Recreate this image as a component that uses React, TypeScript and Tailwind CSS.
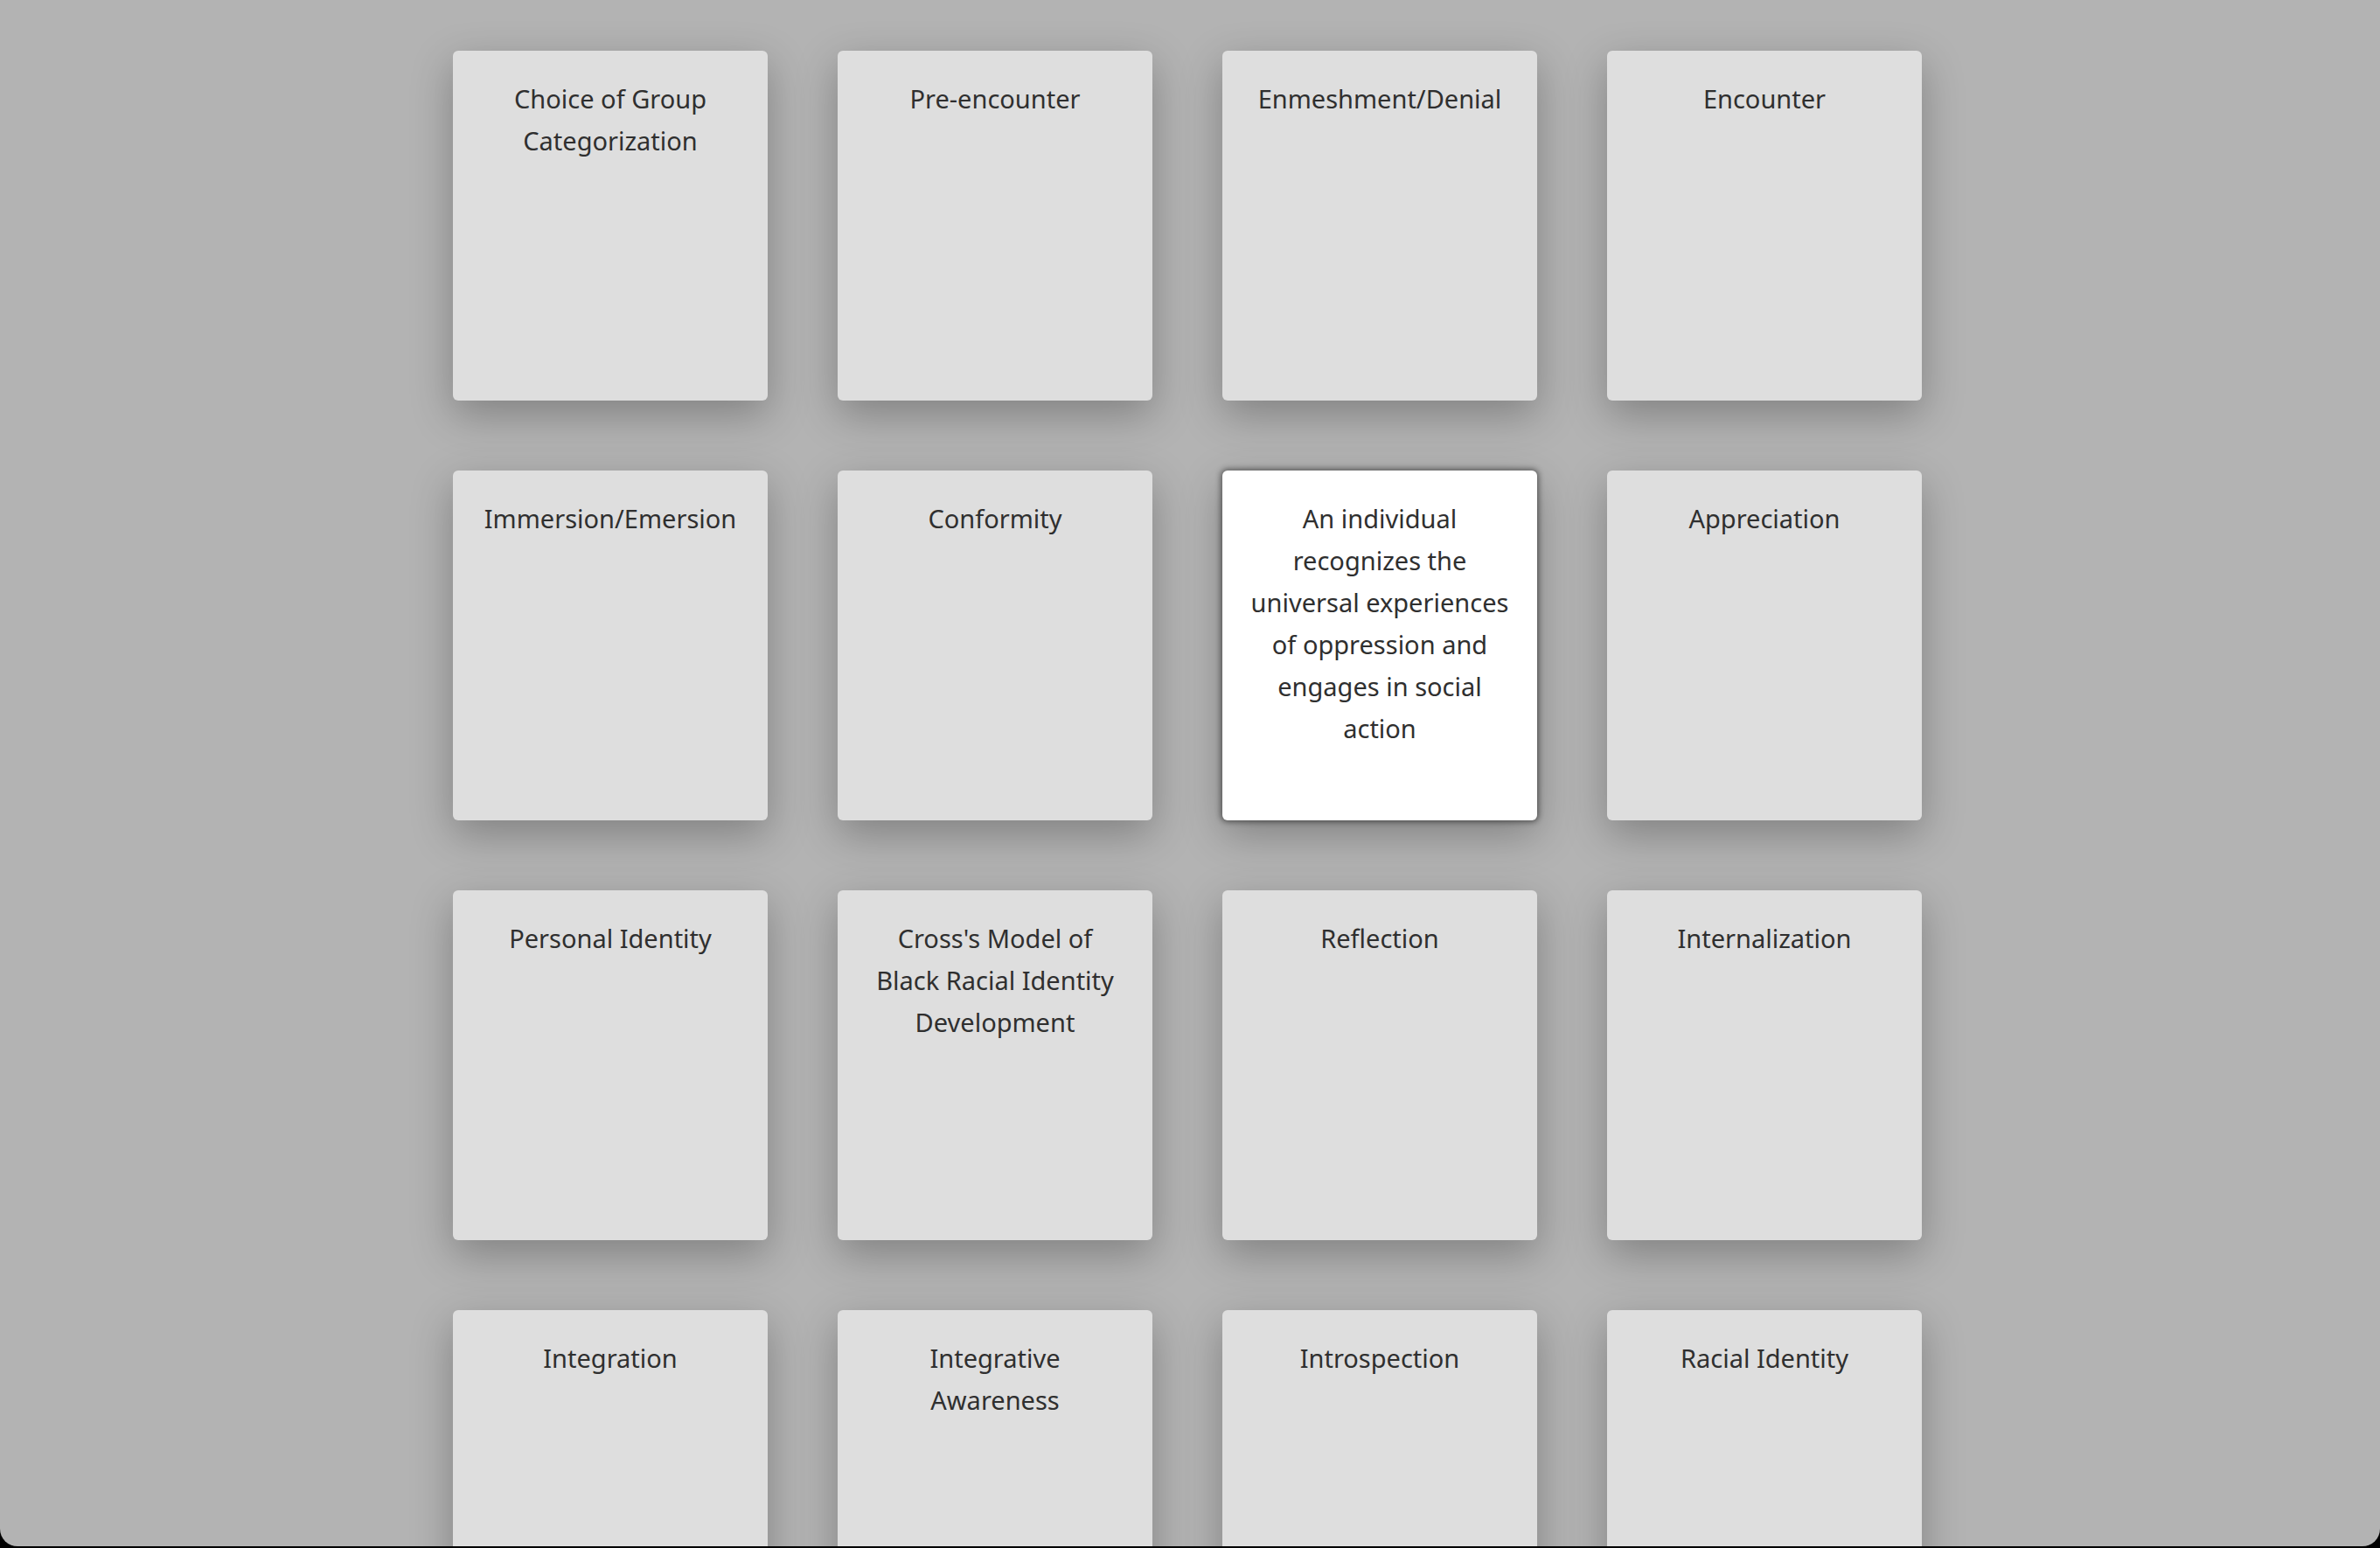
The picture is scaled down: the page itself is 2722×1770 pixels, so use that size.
import React from "react";

const cards: { text: string; active?: boolean }[] = [
  { text: "Choice of Group Categorization" },
  { text: "Pre-encounter" },
  { text: "Enmeshment/Denial" },
  { text: "Encounter" },
  { text: "Immersion/Emersion" },
  { text: "Conformity" },
  {
    text: "An individual recognizes the universal experiences of oppression and engages in social action",
    active: true,
  },
  { text: "Appreciation" },
  { text: "Personal Identity" },
  { text: "Cross's Model of Black Racial Identity Development" },
  { text: "Reflection" },
  { text: "Internalization" },
  { text: "Integration" },
  { text: "Integrative Awareness" },
  { text: "Introspection" },
  { text: "Racial Identity" },
];

export default function App() {
  return (
    <div className="w-[2722px] h-[1770px] bg-black overflow-hidden">
      <div className="w-full h-[1768px] bg-[#b3b3b3] rounded-b-[20px] overflow-hidden">
        <div className="flex justify-center pt-[58px] pr-[6px]">
          <div className="grid grid-cols-[repeat(4,360px)] gap-[80px]">
            {cards.map((c, i) => (
              <div
                key={i}
                className={
                  c.active
                    ? "h-[400px] rounded-[6px] bg-white px-[30px] pt-[31px] text-center text-[#2f2f2f] text-[29px] leading-[48px] shadow-[0_0_6px_2px_rgba(0,0,0,0.45),0_16px_48px_rgba(0,0,0,0.28)]"
                    : "h-[400px] rounded-[6px] bg-[#dedede] px-[30px] pt-[31px] text-center text-[#2f2f2f] text-[29px] leading-[48px] shadow-[0_16px_48px_rgba(0,0,0,0.28)]"
                }
                style={{ fontFamily: '"Noto Sans", "Open Sans", sans-serif' }}
              >
                {c.text}
              </div>
            ))}
          </div>
        </div>
      </div>
    </div>
  );
}
